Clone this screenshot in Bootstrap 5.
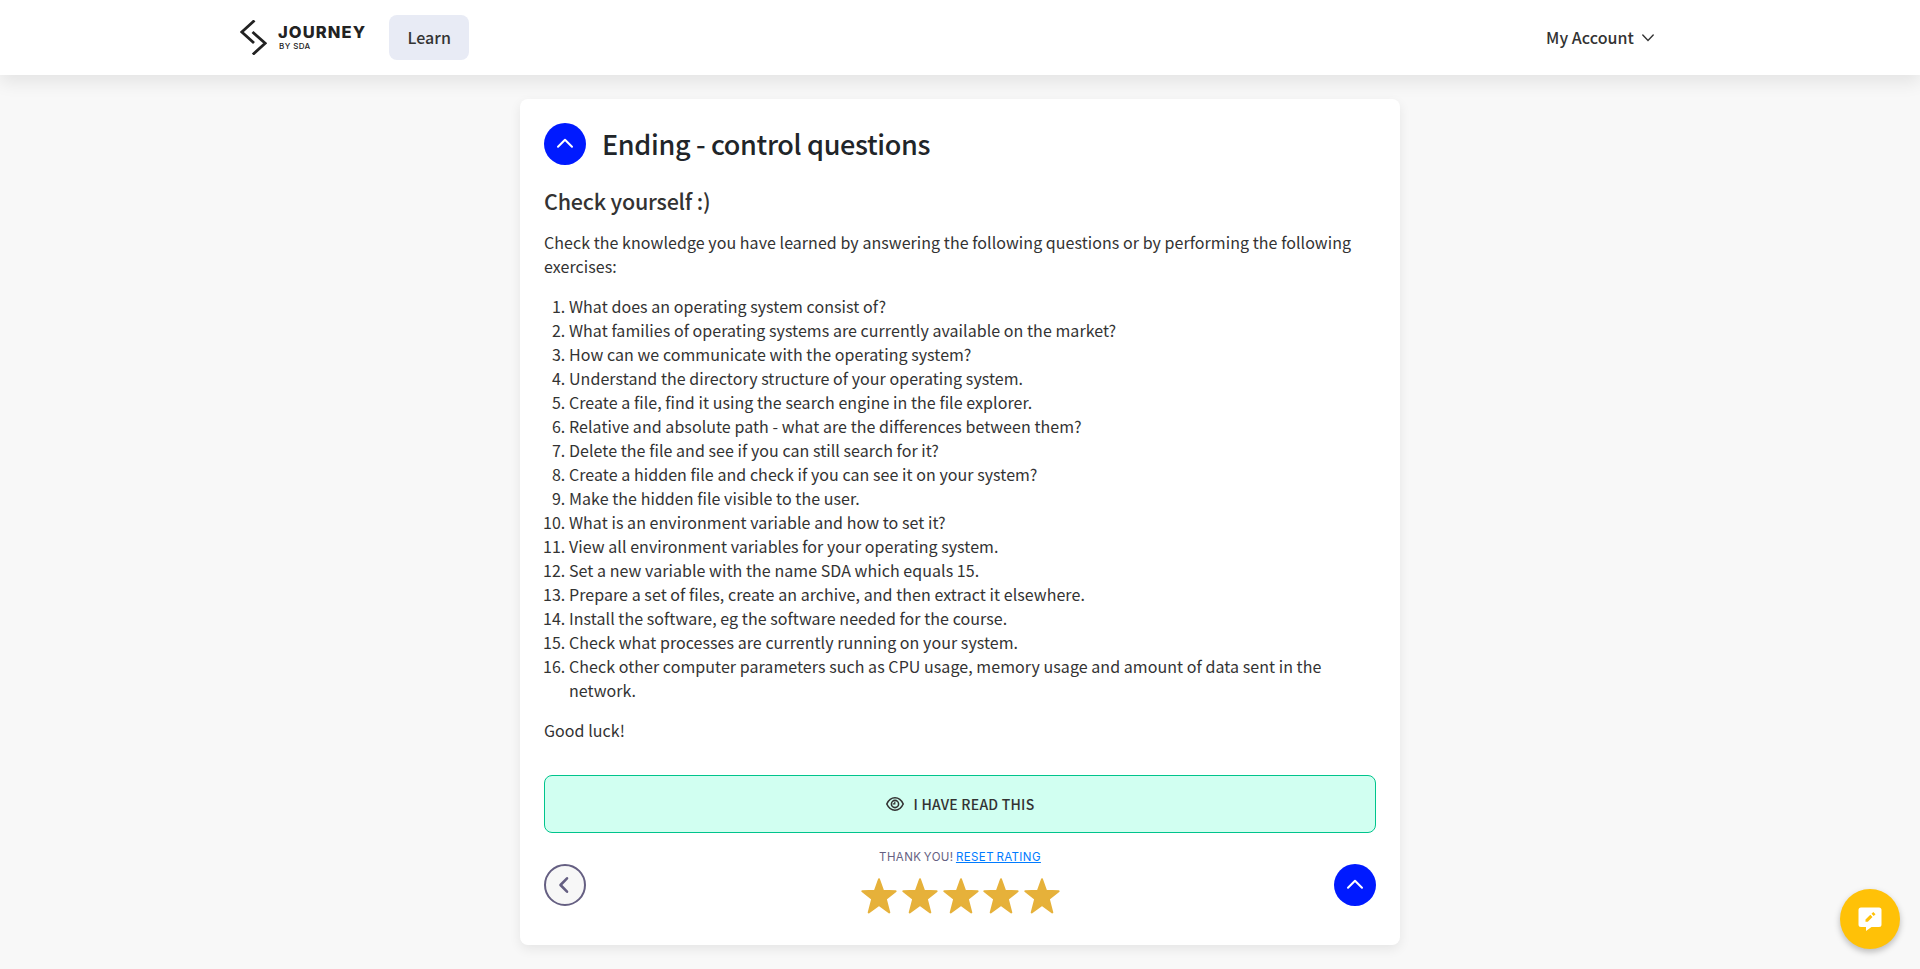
<!DOCTYPE html>
<html lang="en">
<head>
<meta charset="utf-8">
<meta name="viewport" content="width=device-width, initial-scale=1">
<title>Journey by SDA</title>
<link href="https://cdn.jsdelivr.net/npm/bootstrap@5.3.0/dist/css/bootstrap.min.css" rel="stylesheet">
<style>
body{font-family:"Noto Sans CJK SC","Noto Sans CJK JP",sans-serif;letter-spacing:.057px;background:#f8f8f8;color:#333;height:969px;overflow:hidden}
.topbar{height:75px;background:#fff;box-shadow:0 8px 16px rgba(0,0,0,.08);padding:0}
.topbar-inner{width:1440px}
.brand-text{margin-left:11px}
.brand-name{font:800 16.5px/17px Inter,sans-serif;letter-spacing:1.1px;color:#222}
.brand-sub{font:500 8px/9px Inter,sans-serif;letter-spacing:.4px;color:#222;margin:1px 0 0 1px}
.btn-learn{width:80px;height:45px;background:#e8ebf5;border-radius:8px;color:#333;font-weight:500;padding:0 0 2px;margin-left:23px;letter-spacing:.07px}
.btn-learn:hover{background:#dde1ef}
.account{font-weight:500;color:#333;text-decoration:none;margin-right:26px}
.account span{padding-bottom:2px}
.lesson{width:880px;height:846px;margin:24px auto 0;padding:24px;border:0;border-radius:8px;box-shadow:0 4px 12px rgba(0,0,0,.08)}
.round-btn{width:42px;height:42px;border-radius:50%;background:#001aff;flex:none}
.round-btn.prev{background:#f7f7f7;border:2px solid #655f82}
.lesson h1{font-size:27px;font-weight:500;line-height:42px;letter-spacing:-.35px;color:#212529}
.lesson h2{font-size:21.5px;font-weight:500;line-height:29px;letter-spacing:-.2px;margin:21px 0 15px;color:#333}
.lesson p{margin-bottom:16px}
.questions{padding-left:25px;margin-bottom:16px}
.btn-read{height:58px;background:#d1fff1;border:1px solid #00c48c;border-radius:8px;font-size:14px;font-weight:500;letter-spacing:.23px;color:#333;margin-top:17px}
.btn-read:hover{background:#bdf7e5}
.btn-read svg{margin-right:2px}
.rating-box{height:72px}
.rating-note{font:400 11.5px/16px Inter,sans-serif;letter-spacing:.4px;word-spacing:-1.2px;color:#655f82;margin-bottom:13px}
.rating-note a{color:#007bff}
.stars{gap:4.7px;padding-left:1px}
.feedback{right:20px;bottom:20px;width:60px;height:60px;border-radius:50%;background:#ffc107;box-shadow:0 3px 6px rgba(0,0,0,.25)}
</style>
</head>
<body>
<svg class="d-none">
  <symbol id="chev-up" viewBox="0 0 42 42"><path d="M14 23.7l7-7 7 7" fill="none" stroke="#fff" stroke-width="2" stroke-linecap="round" stroke-linejoin="round"/></symbol>
  <symbol id="star" viewBox="0 0 36 36"><path d="M18 1.3L22.1 12.8L34.6 13.2L24.8 20.9L28.3 34.4L18 27L7.7 34.4L11.2 20.9L1.4 13.2L13.9 12.8Z" fill="#e6b13a" stroke="#e6b13a" stroke-width="2" stroke-linejoin="round"/></symbol>
</svg>
<nav class="navbar topbar position-relative">
  <div class="topbar-inner mx-auto d-flex align-items-center">
    <a href="#" class="d-flex align-items-center text-decoration-none">
      <svg width="27" height="35" viewBox="0 0 27 35" fill="none" stroke="#222" stroke-width="2.8"><path d="M14.5 .5L1.8 12L14 23"/><path d="M12.5 12L25.2 23.3L12.8 34.5"/></svg>
      <span class="d-flex flex-column brand-text"><span class="brand-name">JOURNEY</span><span class="brand-sub">BY SDA</span></span>
    </a>
    <button class="btn btn-learn">Learn</button>
    <a href="#" class="account ms-auto d-flex align-items-center gap-2"><span>My Account</span>
      <svg width="12" height="8" viewBox="0 0 12 8" fill="none" stroke="#333" stroke-width="1.4" stroke-linecap="round"><path d="M.8 1L6 6.5L11.2 1"/></svg></a>
  </div>
</nav>
<main class="card lesson">
  <div class="d-flex align-items-center gap-3">
    <a href="#" class="round-btn d-flex"><svg width="42" height="42"><use href="#chev-up"/></svg></a>
    <h1 class="mb-0">Ending - control questions</h1>
  </div>
  <h2>Check yourself :)</h2>
  <p>Check the knowledge you have learned by answering the following questions or by performing the following exercises:</p>
  <ol class="questions">
    <li>What does an operating system consist of?</li>
    <li>What families of operating systems are currently available on the market?</li>
    <li>How can we communicate with the operating system?</li>
    <li>Understand the directory structure of your operating system.</li>
    <li>Create a file, find it using the search engine in the file explorer.</li>
    <li>Relative and absolute path - what are the differences between them?</li>
    <li>Delete the file and see if you can still search for it?</li>
    <li>Create a hidden file and check if you can see it on your system?</li>
    <li>Make the hidden file visible to the user.</li>
    <li>What is an environment variable and how to set it?</li>
    <li>View all environment variables for your operating system.</li>
    <li>Set a new variable with the name SDA which equals 15.</li>
    <li>Prepare a set of files, create an archive, and then extract it elsewhere.</li>
    <li>Install the software, eg the software needed for the course.</li>
    <li>Check what processes are currently running on your system.</li>
    <li>Check other computer parameters such as CPU usage, memory usage and amount of data sent in the network.</li>
  </ol>
  <p>Good luck!</p>
  <button class="btn btn-read d-flex align-items-center justify-content-center gap-2">
    <svg width="18" height="14" viewBox="0 0 18 14" fill="none" stroke="#333" stroke-width="1.6"><path d="M.8 7C2.5 3.2 5.4 .8 9 .8S15.5 3.2 17.2 7C15.5 10.8 12.6 13.2 9 13.2S2.5 10.8 .8 7Z"/><circle cx="9" cy="7" r="3.6"/><path d="M8.8 4.8V6.8H6.8" stroke-width="1.2"/></svg>
    <span>I HAVE READ THIS</span>
  </button>
  <div class="d-flex justify-content-between align-items-center mt-3">
    <a href="#" class="round-btn prev d-flex"><svg width="38" height="38" viewBox="0 0 38 38" fill="none" stroke="#655f82" stroke-width="2.6" stroke-linecap="round" stroke-linejoin="round"><path d="M21 12.3L14.5 19L21 25.7"/></svg></a>
    <div class="text-center rating-box">
      <div class="rating-note">THANK YOU! <a href="#">RESET RATING</a></div>
      <div class="d-flex stars">
        <svg width="36" height="36"><use href="#star"/></svg>
        <svg width="36" height="36"><use href="#star"/></svg>
        <svg width="36" height="36"><use href="#star"/></svg>
        <svg width="36" height="36"><use href="#star"/></svg>
        <svg width="36" height="36"><use href="#star"/></svg>
      </div>
    </div>
    <a href="#" class="round-btn d-flex"><svg width="42" height="42"><use href="#chev-up"/></svg></a>
  </div>
</main>
<a href="#" class="feedback position-fixed d-flex align-items-center justify-content-center">
  <svg width="24" height="24" viewBox="0 0 24 24"><path d="M3 .5H21Q23.5 .5 23.5 3V17.5Q23.5 20 21 20H13.5L8 24V20H3Q.5 20 .5 17.5V3Q.5 .5 3 .5Z" fill="#fff"/><path d="M7.5 14.8V12.5L12.3 7.8L14.5 10L9.8 14.8ZM13.5 6.7L15.3 5L17.5 7.2L15.7 8.9Z" fill="#ffc107"/></svg>
</a>
<script src="https://cdn.jsdelivr.net/npm/bootstrap@5.3.0/dist/js/bootstrap.bundle.min.js"></script>
</body>
</html>
